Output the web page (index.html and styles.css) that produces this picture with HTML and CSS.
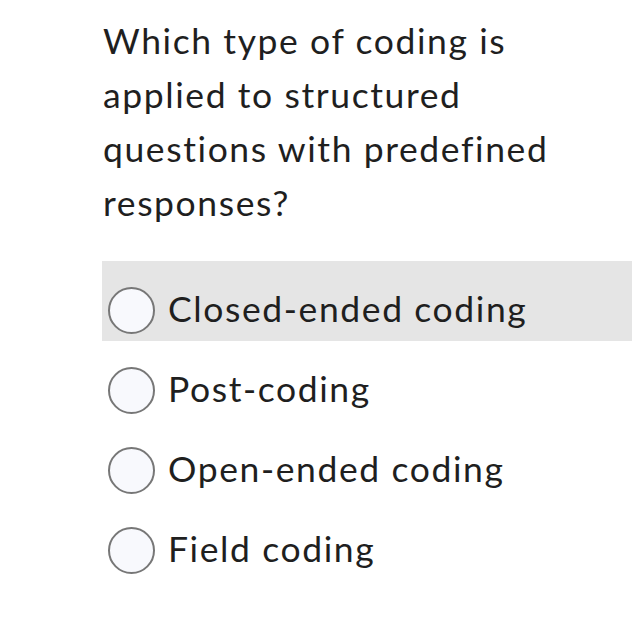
FILE: index.html
```html
<!DOCTYPE html>
<html>
<head>
<meta charset="utf-8">
<link rel="stylesheet" href="styles.css">
</head>
<body>
<div class="quiz">
  <p class="question">Which type of coding is applied to structured questions with predefined responses?</p>
  <div class="options">
    <label class="option selected"><span class="radio"></span><span class="text">Closed-ended coding</span></label>
    <label class="option"><span class="radio"></span><span class="text">Post-coding</span></label>
    <label class="option"><span class="radio"></span><span class="text">Open-ended coding</span></label>
    <label class="option"><span class="radio"></span><span class="text">Field coding</span></label>
  </div>
</div>
</body>
</html>
```
FILE: styles.css
```css
html, body {
  margin: 0;
  padding: 0;
  background: #ffffff;
}
.quiz {
  padding: 14px 5px 0 102px;
  font-family: Lato, "Noto Sans", sans-serif;
  color: #1f1f1f;
  font-variant-ligatures: none;
}
.question {
  margin: 0 0 0 1px;
  width: 470px;
  font-size: 35.5px;
  line-height: 54px;
  letter-spacing: 1.6px;
}
.options {
  margin-top: 31px;
  display: flex;
  flex-direction: column;
}
.option {
  box-sizing: border-box;
  display: flex;
  align-items: center;
  height: 80px;
  padding: 18px 0 0 6px;
  gap: 13px;
}
.option.selected {
  background: #e5e5e5;
}
.radio {
  width: 43px;
  height: 43px;
  border: 2px solid #777777;
  border-radius: 50%;
  background: #f8f9fd;
  flex: none;
}
.text {
  font-size: 35.5px;
  letter-spacing: 1.6px;
  margin-top: -4px;
}
```
